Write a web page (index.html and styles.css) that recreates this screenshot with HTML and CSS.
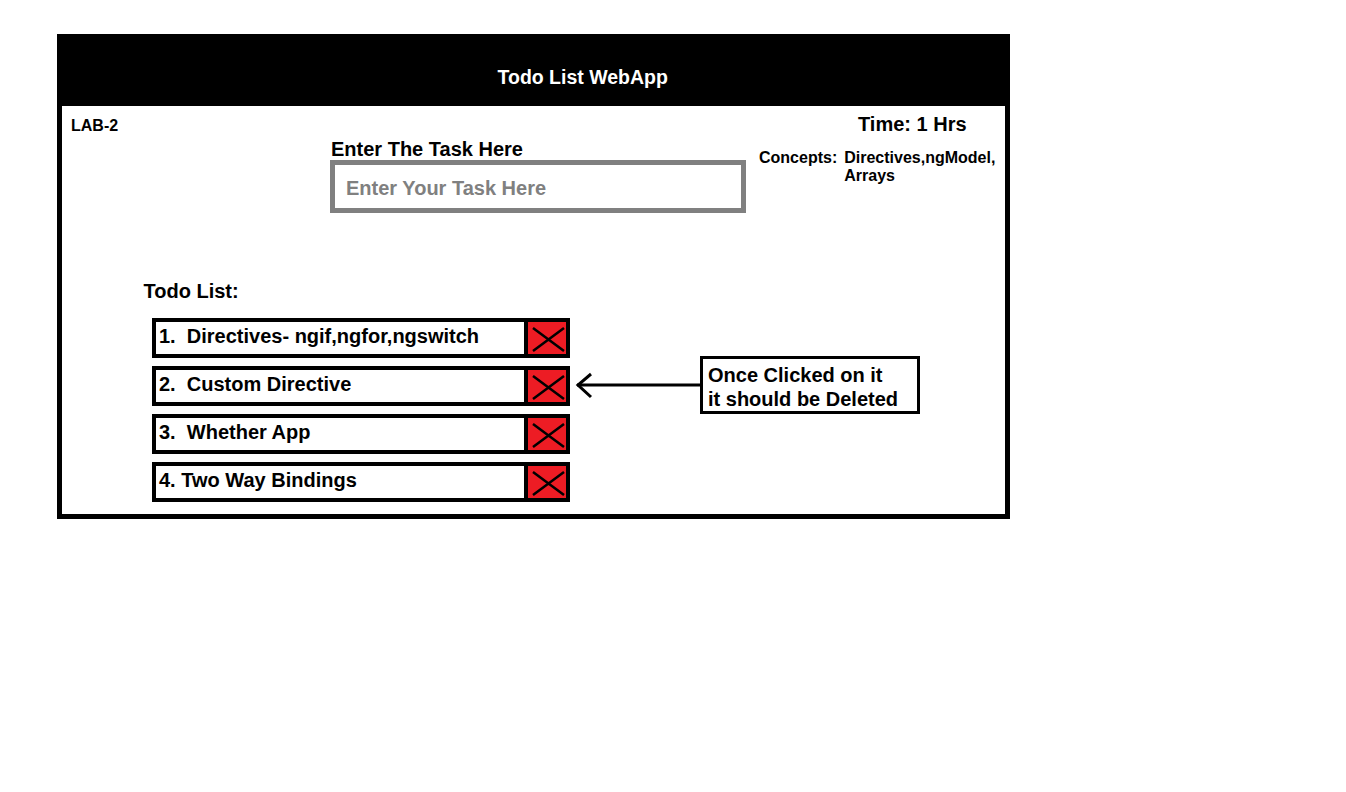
FILE: index.html
```html
<!DOCTYPE html>
<html lang="en">
<head>
<meta charset="utf-8">
<title>Todo List WebApp</title>
<link rel="stylesheet" href="styles.css">
</head>
<body>
<div class="page">
  <div class="frame">
    <header class="header">Todo List WebApp</header>
    <main class="content">
      <div class="top-row">
        <div class="lab">LAB-2</div>
        <div class="task">
          <label class="task-label" for="task">Enter The Task Here</label>
          <input id="task" class="task-input" type="text" placeholder="Enter Your Task Here">
        </div>
        <div class="meta">
          <div class="time">Time: 1 Hrs</div>
          <div class="concepts">
            <span class="concepts-label">Concepts:</span>
            <span class="concepts-value">Directives,ngModel,<br>Arrays</span>
          </div>
        </div>
      </div>
      <section class="todo">
        <h2 class="todo-title">Todo List:</h2>
        <ul class="todo-list">
          <li class="todo-item">
            <span class="todo-text">1.  Directives- ngif,ngfor,ngswitch</span>
            <button class="delete" type="button" aria-label="Delete"><svg width="38" height="32" viewBox="0 0 38 32"><path d="M5 6 L36 29 M36 6 L5 29" stroke="#000" stroke-width="2.5" fill="none"/></svg></button>
          </li>
          <li class="todo-item">
            <span class="todo-text">2.  Custom Directive</span>
            <button class="delete" type="button" aria-label="Delete"><svg width="38" height="32" viewBox="0 0 38 32"><path d="M5 6 L36 29 M36 6 L5 29" stroke="#000" stroke-width="2.5" fill="none"/></svg></button>
            <div class="callout">
              <svg class="arrow" width="125" height="28" viewBox="0 0 125 28"><path d="M2 14 H125" stroke="#000" stroke-width="3" fill="none"/><path d="M16 3 L3 14 L16 26" stroke="#000" stroke-width="3" fill="none"/></svg>
              <div class="note">Once Clicked on it<br>it should be Deleted</div>
            </div>
          </li>
          <li class="todo-item">
            <span class="todo-text">3.  Whether App</span>
            <button class="delete" type="button" aria-label="Delete"><svg width="38" height="32" viewBox="0 0 38 32"><path d="M5 6 L36 29 M36 6 L5 29" stroke="#000" stroke-width="2.5" fill="none"/></svg></button>
          </li>
          <li class="todo-item">
            <span class="todo-text">4. Two Way Bindings</span>
            <button class="delete" type="button" aria-label="Delete"><svg width="38" height="32" viewBox="0 0 38 32"><path d="M5 6 L36 29 M36 6 L5 29" stroke="#000" stroke-width="2.5" fill="none"/></svg></button>
          </li>
        </ul>
      </section>
    </main>
  </div>
</div>
</body>
</html>
```

FILE: styles.css
```css
* { box-sizing: border-box; }

html, body {
  margin: 0;
  padding: 0;
  background: #fff;
}

body {
  font-family: "Liberation Sans", Arial, sans-serif;
  font-weight: bold;
  color: #000;
}

.page {
  padding: 34px 0 0 57px;
}

.frame {
  width: 953px;
  height: 485px;
  border: 5px solid #000;
  background: #fff;
  display: flex;
  flex-direction: column;
}

.header {
  height: 67px;
  background: #000;
  color: #fff;
  font-size: 19.5px;
  line-height: 24px;
  padding: 26px 0 0 435.5px;
}

.content {
  flex: 1;
}

.top-row {
  display: flex;
  align-items: flex-start;
  padding-left: 9px;
}

.lab {
  width: 259px;
  flex: none;
  font-size: 16px;
  line-height: 18px;
  padding-top: 11px;
}

.task {
  width: 416px;
  flex: none;
  padding-top: 33px;
}

.task-label {
  display: block;
  font-size: 20px;
  line-height: 20px;
  padding-left: 1px;
  margin-bottom: 1px;
}

.task-input {
  display: block;
  width: 416px;
  height: 53px;
  margin: 0;
  border: 5px solid #808080;
  border-radius: 0;
  background: #fff;
  padding: 11px 10px 8px 11px;
  font-family: "Liberation Sans", Arial, sans-serif;
  font-weight: bold;
  font-size: 20px;
  line-height: 24px;
  color: #000;
  outline: none;
}

.task-input::placeholder {
  color: #808080;
  opacity: 1;
}

.meta {
  flex: none;
  margin-left: 13px;
  padding-top: 6px;
}

.time {
  font-size: 20px;
  line-height: 24px;
  margin-left: 99px;
}

.concepts {
  display: flex;
  align-items: flex-start;
  gap: 7px;
  margin-top: 13px;
  font-size: 16px;
  line-height: 18px;
}

.todo {
  margin-top: 66px;
  padding-left: 81.5px;
}

.todo-title {
  margin: 0 0 15px;
  font-size: 20px;
  line-height: 24px;
  font-weight: bold;
}

.todo-list {
  list-style: none;
  margin: 0 0 0 8.5px;
  padding: 0;
  display: flex;
  flex-direction: column;
  gap: 8px;
}

.todo-item {
  position: relative;
  display: flex;
  width: 418px;
  height: 40px;
}

.todo-text {
  width: 372px;
  height: 40px;
  border: 4px solid #000;
  border-right: 0;
  padding: 2px 0 6px 3px;
  font-size: 20px;
  line-height: 24px;
  white-space: pre;
}

.delete {
  width: 46px;
  height: 40px;
  margin: 0;
  padding: 0;
  border: 4px solid #000;
  border-radius: 0;
  background: #ed1c24;
  display: flex;
  align-items: center;
  justify-content: center;
}

.delete svg {
  display: block;
}

.callout {
  position: absolute;
  left: calc(100% + 5px);
  top: -10px;
  display: flex;
  align-items: center;
}

.arrow {
  display: block;
  flex: none;
}

.note {
  width: 220px;
  height: 58px;
  border: 3px solid #000;
  background: #fff;
  padding: 4px 4px 0 5px;
  font-size: 20px;
  line-height: 24px;
  white-space: nowrap;
}
```
